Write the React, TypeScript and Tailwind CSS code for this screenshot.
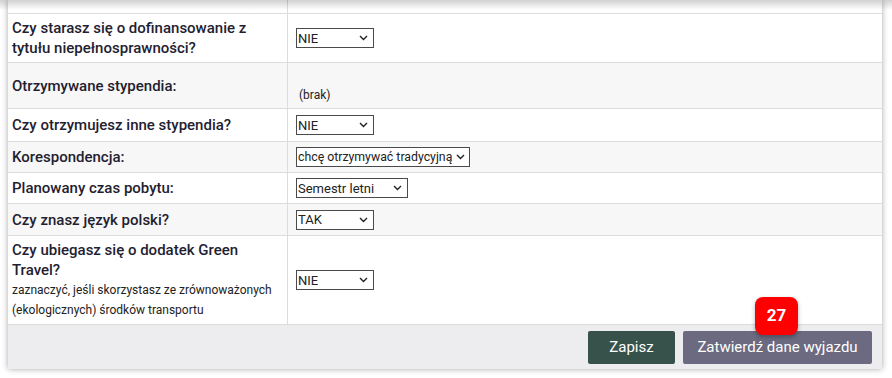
import React from "react";

function FakeSelect({ value, width, small }: { value: string; width: number; small?: boolean }) {
  return (
    <div
      className={`flex h-[20px] items-center justify-between whitespace-nowrap border border-[#4a4a4a] bg-white pl-[1px] pr-[5px] leading-none text-[#222] ${
        small ? "text-[12.3px]" : "text-[13px]"
      }`}
      style={{ width }}
    >
      <span>{value}</span>
      <svg width="9" height="6" viewBox="0 0 9 6" className="ml-1 shrink-0">
        <path d="M1 1 L4.5 4.5 L8 1" fill="none" stroke="#222" strokeWidth="1.4" />
      </svg>
    </div>
  );
}

function Row({
  label,
  children,
  h,
  bg,
}: {
  label: React.ReactNode;
  children: React.ReactNode;
  h: string;
  bg: string;
}) {
  return (
    <div className={`grid grid-cols-[280px_1fr] border-b border-[#dcdcdc] ${h} ${bg}`}>
      <div className="flex items-center border-r border-[#dcdcdc] pl-[4px] pr-2 text-[15px] font-medium leading-[20px] text-[#1f2130]">
        <div>{label}</div>
      </div>
      <div className="flex items-center pl-[8px]">{children}</div>
    </div>
  );
}

export default function App() {
  return (
    <div className="relative h-[378px] w-[892px] overflow-hidden bg-white font-['Roboto',sans-serif]">
      <div className="ml-[8px] mr-[10px] bg-white shadow-[0_0_6px_rgba(0,0,0,0.35)]">
        <div className="grid h-[14px] grid-cols-[280px_1fr] border-b border-[#dcdcdc]">
          <div className="border-r border-[#dcdcdc]" />
          <div />
        </div>
        <Row
          h="h-[49px]"
          bg="bg-white"
          label={
            <>
              Czy starasz się o dofinansowanie z<br />
              tytułu niepełnosprawności?
            </>
          }
        >
          <FakeSelect value="NIE" width={78} />
        </Row>
        <div className="grid h-[46px] grid-cols-[280px_1fr] border-b border-[#dcdcdc] bg-[#f7f7f7]">
          <div className="flex items-center border-r border-[#dcdcdc] pl-[4px] text-[15px] font-medium leading-[20px] text-[#1f2130]">
            Otrzymywane stypendia:
          </div>
          <div className="pl-[11px] pt-[24px] text-[12px] leading-[16px] text-[#222]">(brak)</div>
        </div>
        <Row h="h-[33px]" bg="bg-white" label="Czy otrzymujesz inne stypendia?">
          <FakeSelect value="NIE" width={78} />
        </Row>
        <Row h="h-[31px]" bg="bg-[#f7f7f7]" label="Korespondencja:">
          <FakeSelect value="chcę otrzymywać tradycyjną" width={174} small />
        </Row>
        <Row h="h-[31px]" bg="bg-white" label="Planowany czas pobytu:">
          <FakeSelect value="Semestr letni" width={112} />
        </Row>
        <Row h="h-[32px]" bg="bg-[#f7f7f7]" label="Czy znasz język polski?">
          <FakeSelect value="TAK" width={78} />
        </Row>
        <Row
          h="h-[89px]"
          bg="bg-white"
          label={
            <>
              <div>
                Czy ubiegasz się o dodatek Green
                <br />
                Travel?
              </div>
              <div className="text-[12px] font-normal leading-[20px] text-[#222]">
                zaznaczyć, jeśli skorzystasz ze zrównoważonych
                <br />
                (ekologicznych) środków transportu
              </div>
            </>
          }
        >
          <FakeSelect value="NIE" width={78} />
        </Row>
        <div className="flex h-[44px] items-center justify-end gap-[8px] bg-[#ededf0] pr-[10px] pt-[1px]">
          <button className="h-[33px] w-[87px] rounded-[2px] bg-[#37524b] text-[15px] text-white">
            Zapisz
          </button>
          <div className="relative">
            <button className="h-[33px] w-[189px] rounded-[2px] bg-[#6b6a80] text-[15px] text-white">
              Zatwierdź dane wyjazdu
            </button>
            <div className="absolute left-[72px] top-[-34px] flex h-[38px] w-[43px] items-center justify-center rounded-[8px] bg-[#ff0000] text-[17px] font-bold text-white shadow-[0_2px_4px_rgba(0,0,0,0.3)]">
              27
            </div>
          </div>
        </div>
      </div>
      <div className="pointer-events-none absolute left-0 right-0 top-0 h-[10px] bg-gradient-to-b from-[rgba(0,0,0,0.18)] to-transparent" />
    </div>
  );
}
